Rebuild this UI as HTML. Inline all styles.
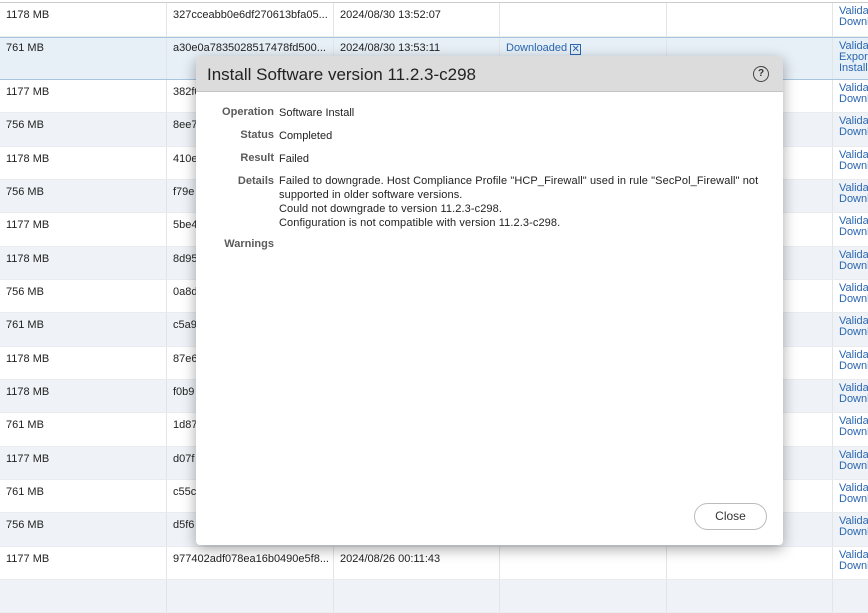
<!DOCTYPE html>
<html><head><meta charset="utf-8"><style>
*{margin:0;padding:0;box-sizing:border-box}
body{width:868px;height:583px;overflow:hidden;background:#fff;font-family:"Liberation Sans",sans-serif;font-size:11px;color:#222;position:relative}
.row{position:absolute;left:0;width:868px;border-bottom:1px solid #e8ecef}
.row.s{background:#eff3f7}
.row.sel{background:#e7eff7;border-top:1px solid #a9c6e0;border-bottom:1px solid #a9c6e0}
.c{position:absolute;top:0;bottom:0;padding:6px 0 0 6px;white-space:nowrap;overflow:hidden;border-left:1px solid #e2e5e8}
.c0{left:0;width:166px;border-left:none}
.c1{left:166px;width:167px}
.c2{left:333px;width:166px}
.c3{left:499px;width:167px}
.c4{left:666px;width:166px}
.c5{left:832px;width:36px;padding-top:3px;color:#2a66b0;line-height:11px;font-size:11px}
.lnk{color:#2a66b0}
.topline{position:absolute;left:0;top:0;width:868px;height:3px;background:#fff;border-bottom:1px solid #ccc}
.modal{position:absolute;left:196px;top:56px;width:587px;height:489px;background:#fff;border-radius:4px;box-shadow:0 4px 14px rgba(0,0,0,.35)}
.mh{height:36px;background:#dcdcdc;border-bottom:1px solid #c4c4c4;border-radius:4px 4px 0 0;font-size:17px;color:#222;padding:9px 0 0 11px}
.help{position:absolute;right:14px;top:10px;width:16px;height:16px;border:1.2px solid #444;border-radius:50%;font-size:10px;font-weight:bold;text-align:center;line-height:14px;color:#333}
.lab{position:absolute;left:0;width:78px;text-align:right;font-weight:bold;color:#5a5a5a;font-size:11px}
.val{position:absolute;left:83px;font-size:11px;color:#222;line-height:14px}
.btn{position:absolute;left:498px;top:447px;width:73px;height:27px;border:1px solid #bbb;border-radius:14px;text-align:center;line-height:25px;font-size:12px;color:#333;background:#fff}
</style></head><body>
<div class="topline"></div>

<div class="row" style="top:3px;height:34px"><div class="c c0" style="padding-top:6px">1178 MB</div><div class="c c1" style="padding-top:6px">327cceabb0e6df270613bfa05...</div><div class="c c2" style="padding-top:6px">2024/08/30 13:52:07</div><div class="c c3"></div><div class="c c4"></div><div class="c c5">Validate<br>Download</div></div>
<div class="row sel" style="top:37px;height:43px"><div class="c c0" style="padding-top:4px">761 MB</div><div class="c c1" style="padding-top:4px">a30e0a7835028517478fd500...</div><div class="c c2" style="padding-top:4px">2024/08/30 13:53:11</div><div class="c c3" style="padding-top:4px"><span class="lnk">Downloaded</span> <span style="display:inline-block;width:11px;height:11px;border:1px solid #2a66b0;color:#2a66b0;font-size:10px;line-height:9px;text-align:center;vertical-align:-1px">✕</span></div><div class="c c4"></div><div class="c c5">Validate<br>Export<br>Install</div></div>

<div class="row" style="top:80px;height:33px"><div class="c c0">1177 MB</div><div class="c c1">382f0</div><div class="c c2"></div><div class="c c3"></div><div class="c c4"></div><div class="c c5">Validate<br>Download</div></div>
<div class="row s" style="top:113px;height:34px"><div class="c c0">756 MB</div><div class="c c1">8ee7</div><div class="c c2"></div><div class="c c3"></div><div class="c c4"></div><div class="c c5">Validate<br>Download</div></div>
<div class="row" style="top:147px;height:33px"><div class="c c0">1178 MB</div><div class="c c1">410e</div><div class="c c2"></div><div class="c c3"></div><div class="c c4"></div><div class="c c5">Validate<br>Download</div></div>
<div class="row s" style="top:180px;height:33px"><div class="c c0">756 MB</div><div class="c c1">f79e</div><div class="c c2"></div><div class="c c3"></div><div class="c c4"></div><div class="c c5">Validate<br>Download</div></div>
<div class="row" style="top:213px;height:34px"><div class="c c0">1177 MB</div><div class="c c1">5be4</div><div class="c c2"></div><div class="c c3"></div><div class="c c4"></div><div class="c c5">Validate<br>Download</div></div>
<div class="row s" style="top:247px;height:33px"><div class="c c0">1178 MB</div><div class="c c1">8d95</div><div class="c c2"></div><div class="c c3"></div><div class="c c4"></div><div class="c c5">Validate<br>Download</div></div>
<div class="row" style="top:280px;height:33px"><div class="c c0">756 MB</div><div class="c c1">0a8d</div><div class="c c2"></div><div class="c c3"></div><div class="c c4"></div><div class="c c5">Validate<br>Download</div></div>
<div class="row s" style="top:313px;height:34px"><div class="c c0">761 MB</div><div class="c c1">c5a9</div><div class="c c2"></div><div class="c c3"></div><div class="c c4"></div><div class="c c5">Validate<br>Download</div></div>
<div class="row" style="top:347px;height:33px"><div class="c c0">1178 MB</div><div class="c c1">87e6</div><div class="c c2"></div><div class="c c3"></div><div class="c c4"></div><div class="c c5">Validate<br>Download</div></div>
<div class="row s" style="top:380px;height:33px"><div class="c c0">1178 MB</div><div class="c c1">f0b9</div><div class="c c2"></div><div class="c c3"></div><div class="c c4"></div><div class="c c5">Validate<br>Download</div></div>
<div class="row" style="top:413px;height:34px"><div class="c c0">761 MB</div><div class="c c1">1d87</div><div class="c c2"></div><div class="c c3"></div><div class="c c4"></div><div class="c c5">Validate<br>Download</div></div>
<div class="row s" style="top:447px;height:33px"><div class="c c0">1177 MB</div><div class="c c1">d07f</div><div class="c c2"></div><div class="c c3"></div><div class="c c4"></div><div class="c c5">Validate<br>Download</div></div>
<div class="row" style="top:480px;height:33px"><div class="c c0">761 MB</div><div class="c c1">c55c</div><div class="c c2"></div><div class="c c3"></div><div class="c c4"></div><div class="c c5">Validate<br>Download</div></div>
<div class="row s" style="top:513px;height:34px"><div class="c c0">756 MB</div><div class="c c1">d5f6</div><div class="c c2"></div><div class="c c3"></div><div class="c c4"></div><div class="c c5">Validate<br>Download</div></div>
<div class="row" style="top:547px;height:33px"><div class="c c0">1177 MB</div><div class="c c1">977402adf078ea16b0490e5f8...</div><div class="c c2">2024/08/26 00:11:43</div><div class="c c3"></div><div class="c c4"></div><div class="c c5">Validate<br>Download</div></div>
<div class="row s" style="top:580px;height:33px"><div class="c c0"></div><div class="c c1"></div><div class="c c2"></div><div class="c c3"></div><div class="c c4"></div><div class="c c5"></div></div>

<div class="modal">
  <div class="mh">Install Software version 11.2.3-c298</div>
  <div class="help">?</div>
  <div class="lab" style="top:50px">Operation</div><div class="val" style="top:50px">Software Install</div>
  <div class="lab" style="top:73px">Status</div><div class="val" style="top:73px">Completed</div>
  <div class="lab" style="top:96px">Result</div><div class="val" style="top:96px">Failed</div>
  <div class="lab" style="top:119px">Details</div><div class="val" style="top:118px;width:500px;letter-spacing:0.1px">Failed to downgrade. Host Compliance Profile "HCP_Firewall" used in rule "SecPol_Firewall" not<br>supported in older software versions.<br>Could not downgrade to version 11.2.3-c298.<br>Configuration is not compatible with version 11.2.3-c298.</div>
  <div class="lab" style="top:182px">Warnings</div>
  <div class="btn">Close</div>
</div>
</body></html>
